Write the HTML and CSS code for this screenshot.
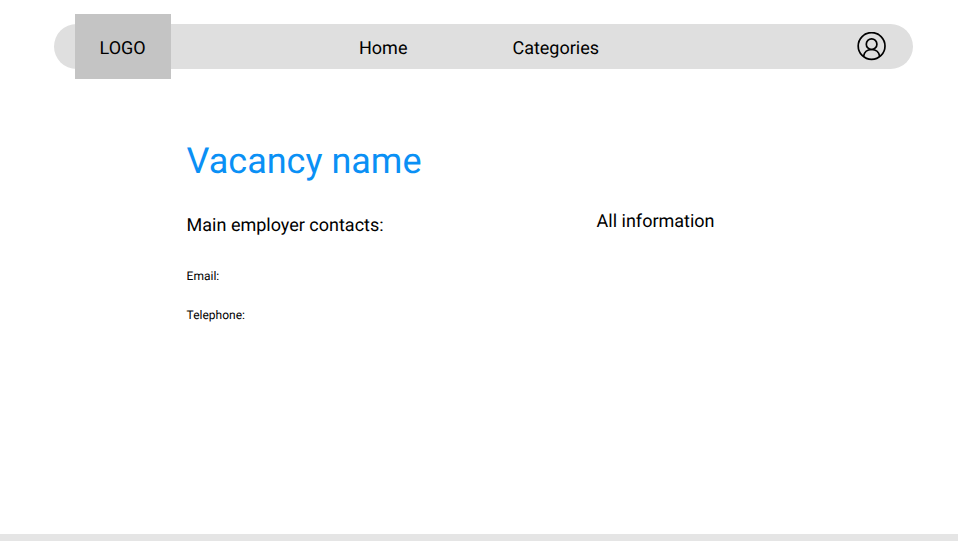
FILE: index.html
```html
<!DOCTYPE html>
<html lang="en">
<head>
<meta charset="utf-8">
<title>Vacancy</title>
<link rel="stylesheet" href="styles.css">
</head>
<body>
<header class="bar">
  <a class="logo">LOGO</a>
  <nav class="nav"><a>Home</a><a>Categories</a></nav>
  <svg class="user" viewBox="0 0 30 30" fill="none" stroke="#000" stroke-width="1.7">
    <circle cx="14.6" cy="14" r="13.4"/>
    <circle cx="14.6" cy="12.2" r="5.3"/>
    <path d="M6.5 24.5C7.2 20.2 10.4 17.5 14.6 17.5s7.4 2.7 8.1 7"/>
  </svg>
</header>
<main class="content">
  <section class="vacancy">
    <h1>Vacancy name</h1>
    <h2>Main employer contacts:</h2>
    <p>Email:</p>
    <p>Telephone:</p>
  </section>
  <section class="info"><h2>All information</h2></section>
</main>
<footer class="footer"></footer>
</body>
</html>
```
FILE: styles.css
```css
* { box-sizing: border-box; }
body {
  margin: 0;
  height: 541px;
  padding-top: 24px;
  display: flex;
  flex-direction: column;
  overflow: hidden;
  background: #fff;
  color: #000;
  font-family: Roboto, sans-serif;
  text-rendering: geometricPrecision;
}
h1, h2, p { margin: 0; font-weight: 400; }
.bar {
  display: flex;
  align-items: center;
  flex: none;
  width: 859px;
  height: 45px;
  margin-left: 53.6px;
  padding: 0 26px 0 21px;
  border-radius: 23px;
  background: #dfdfdf;
  font-size: 18px;
}
.logo {
  display: flex;
  align-items: center;
  justify-content: center;
  width: 96px;
  height: 65px;
  padding-top: 3px;
  background: #c4c4c4;
}
.nav { display: flex; gap: 105px; margin-left: 188.4px; padding-top: 3px; }
.user { width: 30px; height: 30px; margin-left: auto; }
.content { display: flex; flex: 1; padding-left: 186.6px; }
.vacancy { width: 410px; padding-top: 70px; }
.vacancy h1 { font-size: 36px; line-height: 44px; color: #0a90f5; }
.content h2 { font-size: 18px; line-height: 22px; }
.vacancy h2 { margin-top: 32px; margin-bottom: 32px; }
.vacancy p { font-size: 12px; line-height: 14px; margin-bottom: 25px; }
.info { padding-top: 142px; }
.footer { flex: none; height: 7px; background: #e5e5e5; }
```
